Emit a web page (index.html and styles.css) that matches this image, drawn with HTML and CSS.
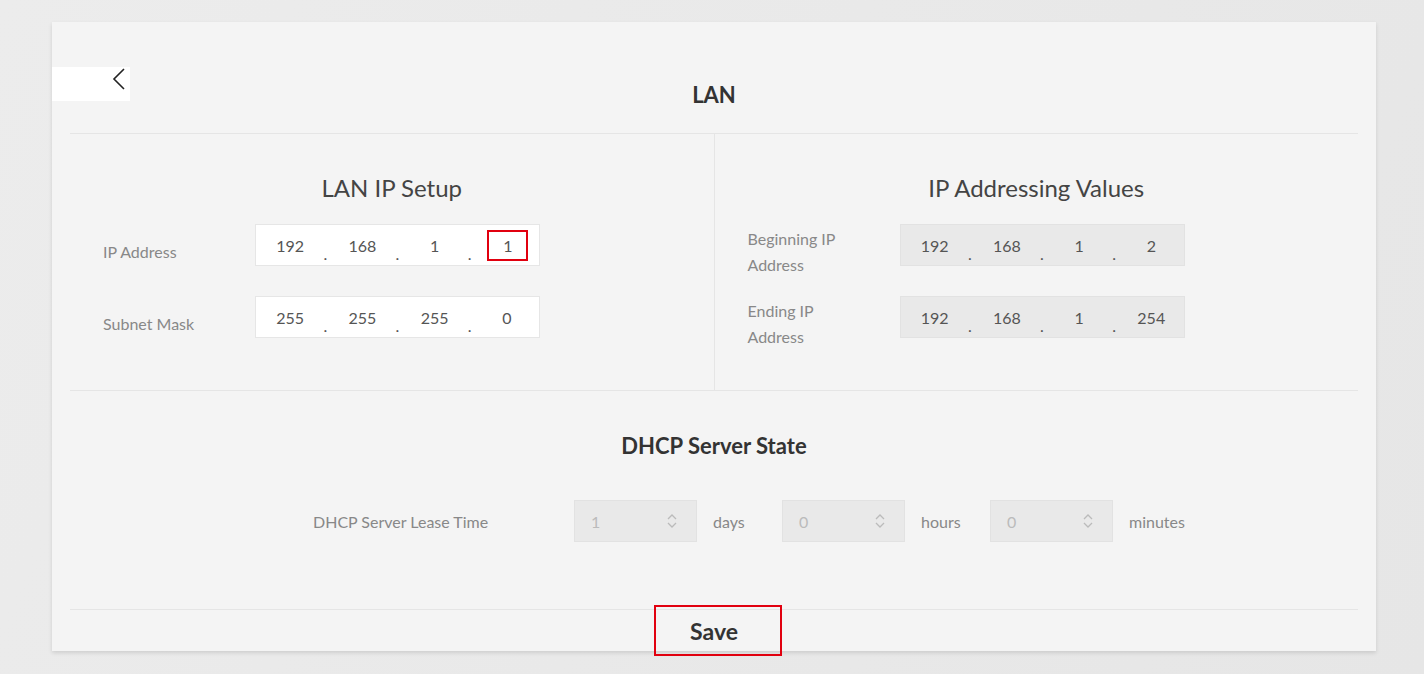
FILE: index.html
```html
<!DOCTYPE html>
<html>
<head>
  <link rel="stylesheet" href="styles.css">
</head>
<body>
  <div class="lan-card">
    <div class="lan-header">
      <div class="back-button">
        <svg width="14" height="24" viewBox="0 0 14 24"><polyline points="12,2 2,12 12,22" fill="none" stroke="#222" stroke-width="1.6"/></svg>
      </div>
      <div class="lan-title">LAN</div>
      <div></div>
    </div>

    <div class="lan-body">
      <div class="lan-columns">
        <div class="lan-column">
          <div class="section-title">LAN IP Setup</div>
          <div class="form-row">
            <div class="form-label">IP Address</div>
            <div class="ip-box">
              <span class="ip-field">192</span><span class="ip-dot">.</span>
              <span class="ip-field">168</span><span class="ip-dot">.</span>
              <span class="ip-field">1</span><span class="ip-dot">.</span>
              <span class="ip-field"><span class="ip-mark">1</span></span>
            </div>
          </div>
          <div class="form-row">
            <div class="form-label">Subnet Mask</div>
            <div class="ip-box">
              <span class="ip-field">255</span><span class="ip-dot">.</span>
              <span class="ip-field">255</span><span class="ip-dot">.</span>
              <span class="ip-field">255</span><span class="ip-dot">.</span>
              <span class="ip-field">0</span>
            </div>
          </div>
        </div>

        <div class="lan-column column-right">
          <div class="section-title">IP Addressing Values</div>
          <div class="form-row">
            <div class="form-label">Beginning IP<br>Address</div>
            <div class="ip-box ip-disabled">
              <span class="ip-field">192</span><span class="ip-dot">.</span>
              <span class="ip-field">168</span><span class="ip-dot">.</span>
              <span class="ip-field">1</span><span class="ip-dot">.</span>
              <span class="ip-field">2</span>
            </div>
          </div>
          <div class="form-row">
            <div class="form-label">Ending IP<br>Address</div>
            <div class="ip-box ip-disabled">
              <span class="ip-field">192</span><span class="ip-dot">.</span>
              <span class="ip-field">168</span><span class="ip-dot">.</span>
              <span class="ip-field">1</span><span class="ip-dot">.</span>
              <span class="ip-field">254</span>
            </div>
          </div>
        </div>
      </div>

      <div class="dhcp-section">
        <div class="section-title bold">DHCP Server State</div>
        <div class="lease-row">
          <div class="lease-label">DHCP Server Lease Time</div>
          <div class="lease-select">
            <span>1</span>
            <svg width="10" height="16" viewBox="0 0 10 16"><polyline points="1,6 5,2 9,6" fill="none" stroke="#bbb" stroke-width="1.3"/><polyline points="1,10 5,14 9,10" fill="none" stroke="#bbb" stroke-width="1.3"/></svg>
          </div>
          <div class="lease-unit">days</div>
          <div class="lease-select">
            <span>0</span>
            <svg width="10" height="16" viewBox="0 0 10 16"><polyline points="1,6 5,2 9,6" fill="none" stroke="#bbb" stroke-width="1.3"/><polyline points="1,10 5,14 9,10" fill="none" stroke="#bbb" stroke-width="1.3"/></svg>
          </div>
          <div class="lease-unit">hours</div>
          <div class="lease-select">
            <span>0</span>
            <svg width="10" height="16" viewBox="0 0 10 16"><polyline points="1,6 5,2 9,6" fill="none" stroke="#bbb" stroke-width="1.3"/><polyline points="1,10 5,14 9,10" fill="none" stroke="#bbb" stroke-width="1.3"/></svg>
          </div>
          <div class="lease-unit">minutes</div>
        </div>
      </div>

      <div class="lan-footer">
        <div class="save-button">Save</div>
      </div>
    </div>
  </div>
</body>
</html>
```

FILE: styles.css
```css
body {
  margin: 0;
  padding: 22px 48px 0 52px;
  height: 674px;
  box-sizing: border-box;
  background: linear-gradient(115deg, #ececec 0%, #e6e6e6 100%);
  font-family: Lato, "Noto Sans", sans-serif;
  overflow: hidden;
}

.lan-card {
  width: 1324px;
  height: 629px;
  background-color: #f4f4f4;
  box-shadow: 0 2px 4px rgba(0, 0, 0, 0.12);
}

.lan-header {
  display: grid;
  grid-template-columns: 1fr auto 1fr;
  height: 111px;
}

.back-button {
  margin-top: 45px;
  width: 78px;
  height: 34px;
  background-color: #fff;
  display: flex;
  justify-content: flex-end;
  align-items: flex-start;
  padding-right: 4px;
  box-sizing: border-box;
}

.lan-title {
  padding-top: 59px;
  font-size: 22px;
  line-height: 28px;
  font-weight: 700;
  color: #333;
}

.lan-body {
  margin: 0 18px;
  border-top: 1px solid #e5e5e5;
}

.lan-columns {
  display: flex;
  height: 256px;
  border-bottom: 1px solid #e5e5e5;
}

.lan-column {
  flex: 1;
  padding: 0 33px;
}

.column-right {
  border-left: 1px solid #e5e5e5;
}

.section-title {
  margin-top: 39px;
  margin-bottom: 21px;
  text-align: center;
  font-size: 24px;
  line-height: 30px;
  font-weight: 400;
  color: #444;
}

.section-title.bold {
  margin: 0;
  font-weight: 700;
  font-size: 22px;
  color: #333;
}

.form-row {
  display: flex;
  align-items: center;
  height: 42px;
  margin-bottom: 30px;
}

.form-label {
  width: 152px;
  flex-shrink: 0;
  margin-top: 14px;
  font-size: 16px;
  line-height: 26px;
  color: #888;
}

.ip-box {
  display: flex;
  width: 285px;
  height: 42px;
  box-sizing: border-box;
  background-color: #fff;
  border: 1px solid #e6e6e6;
}

.ip-disabled {
  background-color: #e9e9e9;
  border-color: #e2e2e2;
}

.ip-field {
  width: 67px;
  display: flex;
  justify-content: center;
  align-items: center;
  padding-left: 2px;
  font-size: 16px;
  color: #555;
}

.ip-dot {
  width: 6px;
  align-self: flex-end;
  text-align: center;
  font-size: 16px;
  line-height: 22px;
  color: #555;
}

.ip-mark {
  width: 41px;
  height: 31px;
  box-sizing: border-box;
  border: 2px solid #e1000f;
  display: flex;
  justify-content: center;
  align-items: center;
  margin-left: 2px;
}

.dhcp-section {
  height: 219px;
  padding-top: 40px;
  box-sizing: border-box;
  border-bottom: 1px solid #e5e5e5;
}

.lease-row {
  display: flex;
  align-items: center;
  margin-top: 39px;
  padding-left: 243px;
}

.lease-label {
  width: 261px;
  font-size: 16px;
  color: #888;
}

.lease-select {
  width: 123px;
  height: 42px;
  box-sizing: border-box;
  background-color: #e9e9e9;
  border: 1px solid #e2e2e2;
  display: flex;
  justify-content: space-between;
  align-items: center;
  padding: 0 19px 0 16px;
  font-size: 16px;
  color: #bbb;
}

.lease-unit {
  width: 85px;
  padding-left: 16px;
  box-sizing: border-box;
  font-size: 16px;
  color: #888;
}

.lan-footer {
  display: flex;
  justify-content: center;
}

.save-button {
  margin-top: -5px;
  margin-left: 7px;
  width: 128px;
  height: 51px;
  box-sizing: border-box;
  border: 2px solid #e1000f;
  display: flex;
  justify-content: center;
  align-items: center;
  padding-right: 7px;
  font-size: 23px;
  font-weight: 700;
  color: #333;
}
```
